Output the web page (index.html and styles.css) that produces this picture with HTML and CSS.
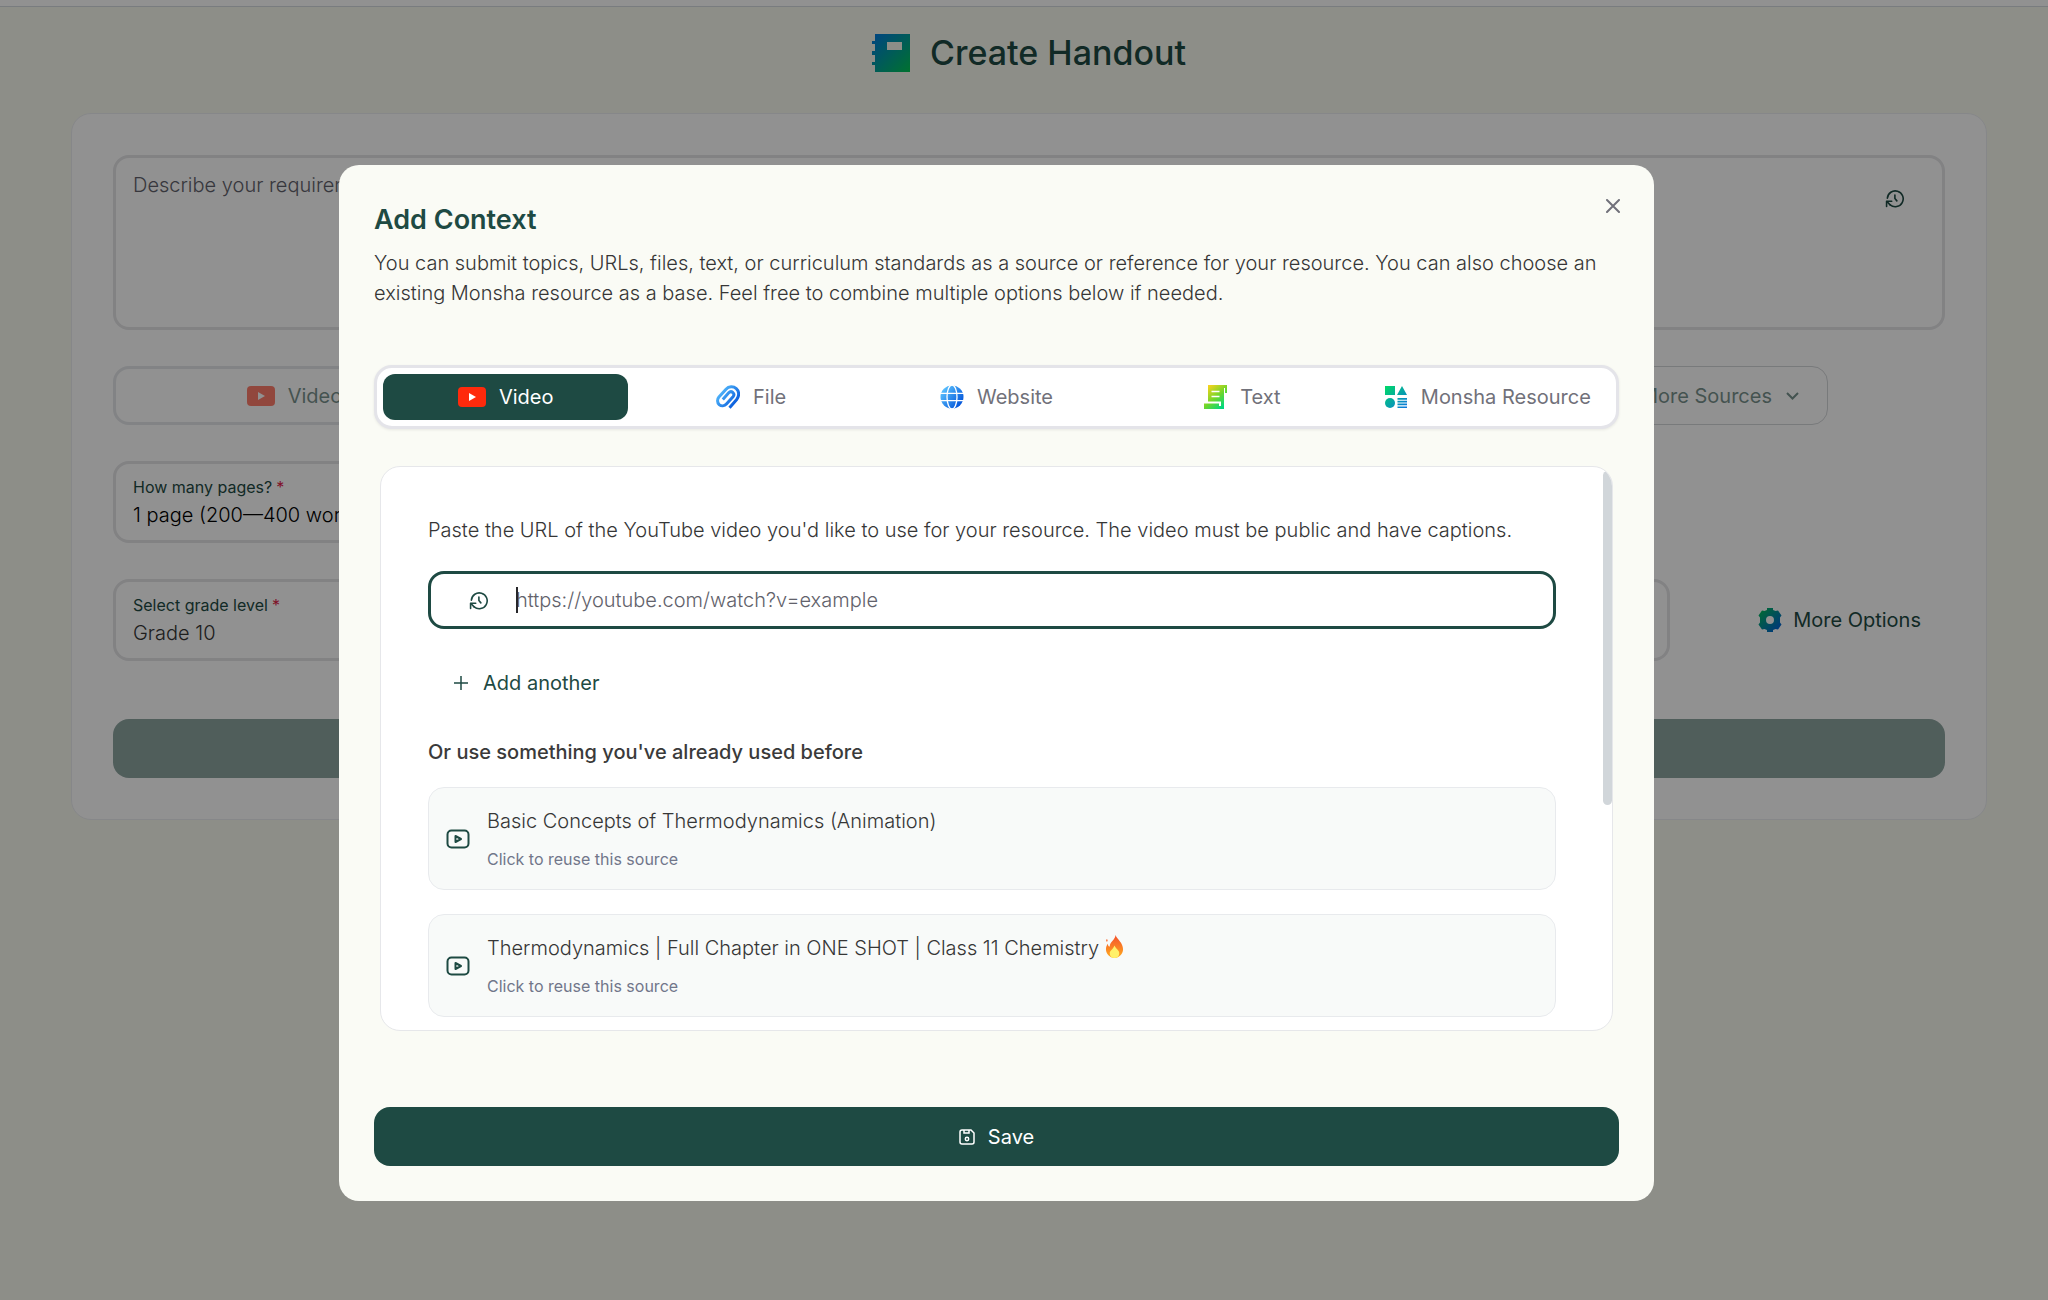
FILE: index.html
```html
<!DOCTYPE html>
<html lang="en">
<head>
    <meta charset="UTF-8">
    <meta name="viewport" content="width=device-width, initial-scale=1.0">
    <title>Create Handout</title>
    <link rel="stylesheet" href="styles.css">
</head>
<body>
    <!-- shared icons -->
    <svg class="icon-defs" aria-hidden="true">
        <defs>
            <linearGradient id="blueGreen" x1="0" y1="0" x2="1" y2="1">
                <stop offset="0" stop-color="#0078e6"/>
                <stop offset="1" stop-color="#00c853"/>
            </linearGradient>
            <linearGradient id="greenBlue" x1="0" y1="0" x2="1" y2="1">
                <stop offset="0.1" stop-color="#00b860"/>
                <stop offset="0.9" stop-color="#0060d8"/>
            </linearGradient>
            <linearGradient id="resourceFill" gradientUnits="userSpaceOnUse" x1="2" y1="2" x2="22" y2="22">
                <stop offset="0" stop-color="#00d66b"/>
                <stop offset="1" stop-color="#0a78dc"/>
            </linearGradient>
            <linearGradient id="sky" gradientUnits="userSpaceOnUse" x1="2" y1="4" x2="22" y2="20">
                <stop offset="0" stop-color="#5cc4ff"/>
                <stop offset="1" stop-color="#0050d8"/>
            </linearGradient>
            <linearGradient id="lime" gradientUnits="userSpaceOnUse" x1="3" y1="2" x2="20" y2="22">
                <stop offset="0" stop-color="#ffd21c"/>
                <stop offset="0.55" stop-color="#6fd62a"/>
                <stop offset="1" stop-color="#00d880"/>
            </linearGradient>
            <linearGradient id="fire" x1="0" y1="0" x2="0" y2="1">
                <stop offset="0" stop-color="#f4502c"/>
                <stop offset="1" stop-color="#ffab1f"/>
            </linearGradient>
        </defs>
        <symbol id="youtube" viewBox="0 0 28 20">
            <rect width="28" height="20" rx="4" fill="#ff2a0c"/>
            <path d="M11 6l7 4-7 4z" fill="#fff"/>
        </symbol>
        <symbol id="history" viewBox="0 0 24 24">
            <g fill="none" stroke="currentColor" stroke-width="2" stroke-linecap="round" stroke-linejoin="round">
                <path d="M3 11.500A10 10 0 1 1 6.500 20"/>
                <path d="M2 22v-6.500h6.500"/>
                <path d="M2.500 16l4 4"/>
                <path d="M12.500 7.500v4.500l2.500 3"/>
            </g>
        </symbol>
        <symbol id="clip" viewBox="0 0 24 24">
            <path d="M13.500 22.800l7.200-8.400c2.700-3.200 2.600-8.100-.4-10.800-3-2.600-7.600-2.400-10.300.6l-7.100 7.800c-1.900 2.200-1.800 5.700.3 7.600 2.100 1.800 5.300 1.600 7.200-.5l6.600-7.400c1.100-1.300 1-3.100-.2-4.200-1.200-1-3-.9-4.100.3l-5.900 6.700" fill="none" stroke="url(#sky)" stroke-width="3"/>
        </symbol>
        <symbol id="globe" viewBox="0 0 24 24">
            <circle cx="12" cy="12" r="11.500" fill="url(#sky)"/>
            <g fill="none" stroke="#fff" stroke-width="1.300">
                <ellipse cx="12" cy="12" rx="5" ry="12"/>
                <path d="M0 8.300h24M0 15.700h24"/>
            </g>
        </symbol>
        <symbol id="scroll" viewBox="0 0 24 24">
            <path d="M5 0h19v8h-2V3h-1v21H1v-5.500h15V21h2v-4.500H5z" fill="url(#lime)"/>
            <path d="M8.500 6.500h8M8.500 11.500h8" stroke="#fff" stroke-width="1.600"/>
        </symbol>
        <symbol id="shapes" viewBox="0 0 24 24">
            <g fill="url(#resourceFill)">
                <path d="M1 1h10v9H1zM18 1l5 9H13z"/>
                <circle cx="6" cy="18" r="5"/>
                <path d="M13.500 13h9.500v1.700h-9.500zM13.500 15.800h9.500v1.700h-9.500zM13.500 18.600h9.500v1.700h-9.500zM13.500 21.400h9.500v1.700h-9.500z"/>
            </g>
        </symbol>
        <symbol id="video-box" viewBox="0 0 24 24">
            <g fill="none" stroke="currentColor" stroke-width="2" stroke-linejoin="round">
                <rect x="1.500" y="3.500" width="21" height="17" rx="4"/>
                <path d="M9.500 9v6l5.500-3z"/>
            </g>
        </symbol>
    </svg>

    <div class="topbar"></div>

    <main class="page">
        <h1 class="page-title">
            <svg width="38" height="38" viewBox="0 0 38 38" aria-hidden="true">
                <path fill="url(#blueGreen)" fill-rule="evenodd" d="M3 0h35v38H3v-7H0v-3h3v-7H0v-4h3v-7H0V7h3zM15 8v8h15V8z"/>
            </svg>
            Create Handout
        </h1>

        <form class="card">
            <div class="prompt">
                <textarea aria-label="Requirements" placeholder="Describe your requirements"></textarea>
                <button class="prompt-history" type="button" aria-label="History"><svg class="icon-sm"><use href="#history"/></svg></button>
            </div>

            <div class="sources">
                <div class="source-group">
                    <button type="button"><svg class="icon-video"><use href="#youtube"/></svg>Video</button>
                    <button type="button"><svg class="icon"><use href="#clip"/></svg>File</button>
                    <button type="button"><svg class="icon"><use href="#globe"/></svg>Website</button>
                    <button type="button"><svg class="icon"><use href="#scroll"/></svg>Text</button>
                </div>
                <button class="more-sources" type="button">More Sources
                    <svg width="13" height="8" viewBox="0 0 13 8" aria-hidden="true"><path d="M1 1l5.500 5.500L12 1" fill="none" stroke="currentColor" stroke-width="2"/></svg>
                </button>
            </div>

            <div class="row">
                <div class="field half">
                    <label for="pages">How many pages?<span>*</span></label>
                    <select id="pages" class="dark"><option>1 page (200—400 words)</option></select>
                </div>
            </div>

            <div class="row">
                <div class="field">
                    <label for="grade">Select grade level<span>*</span></label>
                    <select id="grade"><option>Grade 10</option></select>
                </div>
                <div class="row-end">
                    <button class="more-options" type="button">
                        <svg width="24" height="24" viewBox="0 0 24 24" aria-hidden="true">
                            <path fill="url(#greenBlue)" fill-rule="evenodd" d="M9 0h6v2l2.500 1L20 2.500l3.500 5L22 9.500v5l1.500 2-3.500 5-2.500-.5-2.500 1v2H9v-2L6.500 21 4 21.500l-3.500-5 1.500-2v-5l-1.500-2 3.500-5 2.500.5L9 2zM12 8a4 4 0 1 0 0 8 4 4 0 0 0 0-8z"/>
                        </svg>
                        More Options
                    </button>
                </div>
            </div>

            <button class="generate" type="button" aria-label="Generate" disabled></button>
        </form>
    </main>

    <div class="overlay">
        <div class="modal" role="dialog" aria-labelledby="modalTitle">
            <button class="close" type="button" aria-label="Close">
                <svg width="14" height="14" viewBox="0 0 14 14"><path d="M1 1l12 12M13 1L1 13" stroke="currentColor" stroke-width="2" stroke-linecap="round"/></svg>
            </button>
            <h2 id="modalTitle">Add Context</h2>
            <p class="intro">You can submit topics, URLs, files, text, or curriculum standards as a source or reference for your resource. You can also choose an existing Monsha resource as a base. Feel free to combine multiple options below if needed.</p>

            <div class="tabs" role="tablist">
                <button class="tab active" type="button" role="tab" aria-selected="true"><svg class="icon-video"><use href="#youtube"/></svg>Video</button>
                <button class="tab" type="button" role="tab"><svg class="icon"><use href="#clip"/></svg>File</button>
                <button class="tab" type="button" role="tab"><svg class="icon"><use href="#globe"/></svg>Website</button>
                <button class="tab" type="button" role="tab"><svg class="icon"><use href="#scroll"/></svg>Text</button>
                <button class="tab" type="button" role="tab"><svg class="icon"><use href="#shapes"/></svg>Monsha Resource</button>
            </div>

            <div class="panel">
                <label class="hint" for="videoUrl">Paste the URL of the YouTube video you'd like to use for your resource. The video must be public and have captions.</label>
                <div class="url-box">
                    <svg class="icon-sm"><use href="#history"/></svg>
                    <div class="url-entry">
                        <input id="videoUrl" type="text" placeholder="https://youtube.com/watch?v=example">
                        <span class="caret"></span>
                    </div>
                </div>
                <button class="add" type="button">
                    <svg width="14" height="14" viewBox="0 0 14 14"><path d="M7 0v14M0 7h14" stroke="currentColor" stroke-width="1.500"/></svg>
                    Add another
                </button>

                <h3>Or use something you've already used before</h3>
                <div class="history-list">
                    <button class="history-item" type="button">
                        <svg class="icon-box"><use href="#video-box"/></svg>
                        <span class="history-text">
                            <span class="history-title">Basic Concepts of Thermodynamics (Animation)</span>
                            <span class="history-note">Click to reuse this source</span>
                        </span>
                    </button>
                    <button class="history-item" type="button">
                        <svg class="icon-box"><use href="#video-box"/></svg>
                        <span class="history-text">
                            <span class="history-title">Thermodynamics | Full Chapter in ONE SHOT | Class 11 Chemistry
                                <svg class="flame" viewBox="0 0 20 24" aria-hidden="true">
                                    <path fill="url(#fire)" d="M11 0c2 5 8 8 8 15 0 5-4 9-9 9s-9-4-9-9c0-3 1-5 2-6 0 2 1 3 2 3C5 7 11 5 11 0zM2 4c1 1 1 2 0 3-1-1-1-2 0-3z"/>
                                    <path fill="#fff06a" d="M10 11c1 3 5 5 5 8s-2 5-5 5-5-2-5-5 3-3 5-8z"/>
                                </svg>
                            </span>
                            <span class="history-note">Click to reuse this source</span>
                        </span>
                    </button>
                </div>
                <span class="scroll-thumb"></span>
            </div>

            <button class="save" type="button">
                <svg width="16" height="16" viewBox="0 0 16 16" aria-hidden="true">
                    <path d="M3 1h9l3 3v9a2 2 0 0 1-2 2H3a2 2 0 0 1-2-2V3a2 2 0 0 1 2-2zM5 1v3h5V1" fill="none" stroke="currentColor" stroke-width="1.500"/>
                    <circle cx="8" cy="10" r="1.700" fill="none" stroke="currentColor" stroke-width="1.500"/>
                </svg>
                Save
            </button>
        </div>
    </div>
</body>
</html>
```
FILE: styles.css
```css
* {
    box-sizing: border-box;
}

body {
    margin: 0;
    min-height: 100vh;
    background: #f8faf0;
    color: #363636;
    font-family: Inter, "Noto Sans", sans-serif;
    font-size: 20px;
    font-weight: 300;
    line-height: 30px;
}

button,
input,
select,
textarea {
    font: inherit;
    color: inherit;
}

button {
    display: flex;
    align-items: center;
    justify-content: center;
    padding: 0;
    border: 0;
    background: none;
    cursor: pointer;
}

svg {
    flex-shrink: 0;
}

.icon-defs {
    position: absolute;
    width: 0;
    height: 0;
}

.icon {
    width: 24px;
    height: 24px;
}

.icon-sm {
    width: 19px;
    height: 19px;
}

.icon-video {
    width: 28px;
    height: 20px;
}

.icon-box {
    width: 24px;
    height: 24px;
    color: #1e4a43;
}

/* page behind the dialog */
.topbar {
    height: 7px;
    background: #fff;
    border-bottom: 1px solid #d5dbe0;
}

.page {
    padding: 22px 61px 40px 71px;
}

.page-title {
    display: flex;
    align-items: center;
    justify-content: center;
    gap: 20px;
    margin: 0 0 36px;
    color: #1e4a43;
    font-size: 34px;
    font-weight: 500;
    line-height: 48px;
}

.card {
    display: flex;
    flex-direction: column;
    gap: 36px;
    padding: 41px;
    background: #fff;
    border: 1px solid #eceef1;
    border-radius: 20px;
}

.prompt {
    position: relative;
    display: flex;
}

.prompt textarea {
    flex: 1;
    height: 175px;
    padding: 12px 17px;
    background: #fff;
    border: 3px solid #e4e4e7;
    border-radius: 16px;
    resize: none;
}

.prompt textarea::placeholder {
    color: #62626b;
}

.prompt-history {
    position: absolute;
    top: 34px;
    right: 41px;
    color: #1e4a43;
}

.sources {
    display: flex;
    gap: 64px;
    padding-right: 117px;
    color: #1e4a43;
    font-weight: 400;
    opacity: 0.6;
}

.source-group {
    display: flex;
    flex: 1;
    height: 59px;
    border: 3px solid #d4d8dd;
    border-radius: 16px;
}

.source-group button {
    flex: 1;
    gap: 13px;
}

.more-sources {
    gap: 14px;
    padding: 0 28px;
    border: 1px solid #b8bcc0;
    border-radius: 16px;
}

.row {
    display: flex;
}

.field {
    display: flex;
    flex: 1;
    flex-direction: column;
    height: 82px;
    padding: 10px 17px;
    border: 3px solid #e4e4e7;
    border-radius: 16px;
}

.field.half {
    flex: 0 0 50%;
}

.field label {
    color: #1e4a43;
    font-size: 16px;
    font-weight: 400;
    line-height: 26px;
}

.field label span {
    margin-left: 4px;
    color: #e11d48;
}

.field select {
    height: 28px;
    padding: 0;
    background: none;
    border: 0;
    appearance: none;
}

.field select.dark {
    color: #000;
}

.row-end {
    display: flex;
    justify-content: flex-end;
    width: 275px;
    padding-right: 24px;
}

.more-options {
    gap: 11px;
    color: #1e4a43;
    font-weight: 400;
}

.generate {
    height: 59px;
    margin-top: 22px;
    background: #8ea5a1;
    border-radius: 16px;
}

/* dialog */
.overlay {
    position: fixed;
    inset: 0;
    display: flex;
    align-items: center;
    justify-content: center;
    padding: 66px 55px 0 0;
    background: rgba(0, 0, 0, 0.43);
}

.modal {
    position: relative;
    width: 1315px;
    max-width: 90%;
    padding: 35px;
    background: #fafbf5;
    border-radius: 20px;
}

.close {
    position: absolute;
    top: 34px;
    right: 34px;
    color: #71717a;
}

.modal h2 {
    margin: 0;
    color: #1e4a43;
    font-size: 27px;
    font-weight: 600;
    line-height: 40px;
}

.intro {
    margin: 8px 0 57px;
}

.tabs {
    display: flex;
    height: 64px;
    padding: 6px;
    background: #fff;
    border: 3px solid #e4e4e9;
    border-radius: 18px;
    box-shadow: 0 1px 3px rgba(0, 0, 0, 0.08);
}

.tab {
    flex: 1 1 0;
    gap: 13px;
    color: #71717a;
    font-weight: 400;
    border-radius: 12px;
}

.tab.active {
    background: #1e4a43;
    color: #fff;
}

.panel {
    position: relative;
    margin: 37px 6px 76px;
    padding: 48px 56px 13px 47px;
    overflow: hidden;
    background: #fff;
    border: 1px solid #e6e7ea;
    border-radius: 20px;
}

.hint {
    display: block;
    margin-bottom: 26px;
}

.url-box {
    display: flex;
    align-items: center;
    gap: 28px;
    height: 58px;
    padding: 0 38px;
    border: 3px solid #1e4a43;
    border-radius: 16px;
}

.url-box svg {
    color: #1e4a43;
}

.url-entry {
    position: relative;
    flex: 1;
}

.url-entry input {
    display: block;
    width: 100%;
    padding: 0;
    background: none;
    border: 0;
    outline: none;
}

.url-entry input::placeholder {
    color: #62626b;
}

.caret {
    position: absolute;
    top: 2px;
    left: 0;
    width: 2px;
    height: 26px;
    background: #27272a;
}

.add {
    gap: 15px;
    height: 58px;
    margin: 25px 0;
    padding: 0 26px;
    color: #1e4a43;
    font-weight: 400;
}

.panel h3 {
    margin: 0 0 20px;
    color: #3a3a3a;
    font-size: 20px;
    font-weight: 500;
}

.history-list {
    display: flex;
    flex-direction: column;
    gap: 24px;
}

.history-item {
    justify-content: flex-start;
    gap: 17px;
    height: 103px;
    padding: 0 17px;
    text-align: left;
    background: #f8faf9;
    border: 1px solid #e8eaed;
    border-radius: 16px;
}

.history-text {
    display: flex;
    flex-direction: column;
    gap: 10px;
}

.history-note {
    color: #71768a;
    font-size: 16px;
    font-weight: 400;
    line-height: 26px;
}

.flame {
    width: 19px;
    height: 23px;
    vertical-align: -3px;
}

.scroll-thumb {
    position: absolute;
    top: 4px;
    right: 0;
    width: 9px;
    height: 334px;
    background: #d1d6da;
    border-radius: 5px;
}

.save {
    gap: 13px;
    width: 100%;
    height: 59px;
    color: #fff;
    background: #1e4a43;
    border-radius: 16px;
    font-weight: 400;
}
```
